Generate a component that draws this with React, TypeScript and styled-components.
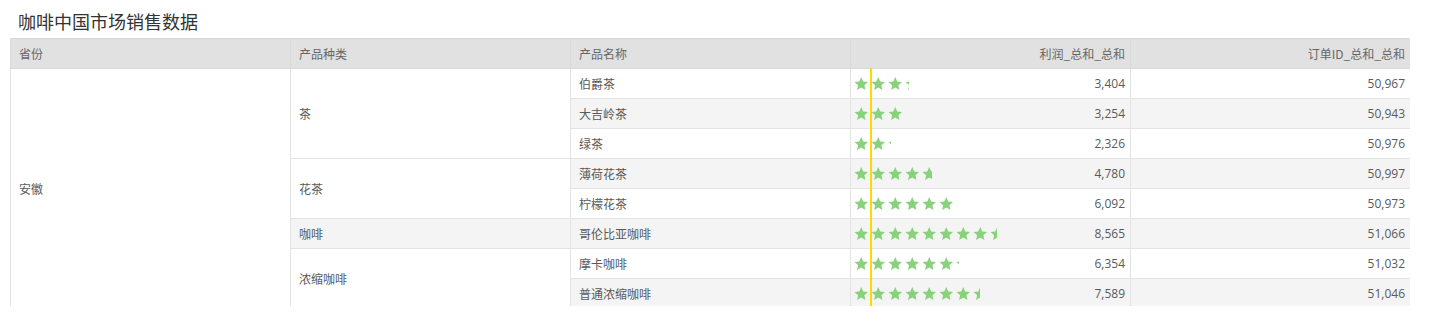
import React from "react";
import styled, { createGlobalStyle } from "styled-components";

const GlobalStyle = createGlobalStyle`
  html, body { margin: 0; padding: 0; background: #ffffff; }
  body { font-family: "Open Sans", "Noto Sans CJK SC", sans-serif; }
`;

const Page = styled.div`
  padding: 0 0 0 10px;
  width: 1400px;
`;

const Title = styled.h1`
  margin: 0;
  height: 38px;
  padding: 9px 0 0 8px;
  box-sizing: border-box;
  font-family: "Noto Sans CJK SC", sans-serif;
  font-size: 18px;
  line-height: 24px;
  font-weight: 400;
  color: #333333;
`;

const TableFrame = styled.div`
  height: 268px;
  overflow: hidden;
`;

const Table = styled.table`
  width: 1400px;
  border-collapse: collapse;
  table-layout: fixed;
  font-family: "Open Sans", "Noto Sans CJK SC", sans-serif;
  font-size: 12px;
  color: #555555;
`;

const HeadCell = styled.th<{ $right?: boolean }>`
  height: 29px;
  padding: 0 ${(p) => (p.$right ? "5px" : "8px")} 0 8px;
  background: #e1e1e1;
  border: 1px solid #d9d9d9;
  font-weight: 400;
  color: #666666;
  text-align: ${(p) => (p.$right ? "right" : "left")};
  white-space: nowrap;
  font-family: "Noto Sans CJK SC", sans-serif;
`;

const Cell = styled.td<{ $striped?: boolean; $right?: boolean }>`
  height: 29px;
  padding: 0 ${(p) => (p.$right ? "5px" : "8px")} 0 8px;
  background: ${(p) => (p.$striped ? "#f4f4f4" : "#ffffff")};
  border: 1px solid #e3e3e3;
  text-align: ${(p) => (p.$right ? "right" : "left")};
  white-space: nowrap;
  color: #5a5a5a;
`;

const CjkText = styled.span`
  font-family: "Noto Sans CJK SC", sans-serif;
`;

const BarCell = styled.td<{ $striped?: boolean }>`
  position: relative;
  height: 29px;
  padding: 0 5px 0 0;
  background: ${(p) => (p.$striped ? "#f4f4f4" : "#ffffff")};
  border: 1px solid #e3e3e3;
`;

const BarRow = styled.div`
  display: flex;
  align-items: center;
  justify-content: space-between;
`;

const StarClip = styled.div`
  overflow: hidden;
  display: flex;
  flex-wrap: nowrap;
  height: 17px;
`;

const Star = styled.svg`
  flex: 0 0 17px;
  width: 17px;
  height: 17px;
`;

const RefLine = styled.div`
  position: absolute;
  left: 19px;
  top: -1px;
  bottom: -1px;
  width: 2px;
  background: #ffd800;
  z-index: 1;
`;

const Value = styled.span`
  color: #5a5a5a;
`;

const UNIT = 17;

const STAR_POINTS =
  "10.25,2 12.19,6.53 17,7.01 13.39,10.22 14.42,14.94 10.25,12.5 6.08,14.94 7.11,10.22 3.5,7.01 8.31,6.53";

function StarBar({ value }: { value: number }) {
  const width = (value / 1000) * UNIT;
  return (
    <StarClip style={{ width }}>
      {Array.from({ length: 10 }).map((_, i) => (
        <Star key={i} viewBox="0 0 17 17">
          <polygon fill="#88d27b" points={STAR_POINTS} />
        </Star>
      ))}
    </StarClip>
  );
}

type Row = {
  province?: { text: string; span: number };
  category?: { text: string; span: number; striped?: boolean };
  name: string;
  profit: number;
  orders: number;
};

const rows: Row[] = [
  { province: { text: "安徽", span: 8 }, category: { text: "茶", span: 3 }, name: "伯爵茶", profit: 3404, orders: 50967 },
  { name: "大吉岭茶", profit: 3254, orders: 50943 },
  { name: "绿茶", profit: 2326, orders: 50976 },
  { category: { text: "花茶", span: 2 }, name: "薄荷花茶", profit: 4780, orders: 50997 },
  { name: "柠檬花茶", profit: 6092, orders: 50973 },
  { category: { text: "咖啡", span: 1, striped: true }, name: "哥伦比亚咖啡", profit: 8565, orders: 51066 },
  { category: { text: "浓缩咖啡", span: 2 }, name: "摩卡咖啡", profit: 6354, orders: 51032 },
  { name: "普通浓缩咖啡", profit: 7589, orders: 51046 },
];

const fmt = (n: number) => n.toLocaleString("en-US");

export default function App() {
  return (
    <>
      <GlobalStyle />
      <Page>
        <Title>咖啡中国市场销售数据</Title>
        <TableFrame>
          <Table>
            <colgroup>
              <col style={{ width: 280 }} />
              <col style={{ width: 280 }} />
              <col style={{ width: 280 }} />
              <col style={{ width: 280 }} />
              <col style={{ width: 280 }} />
            </colgroup>
            <thead>
              <tr>
                <HeadCell>省份</HeadCell>
                <HeadCell>产品种类</HeadCell>
                <HeadCell>产品名称</HeadCell>
                <HeadCell $right>利润_总和_总和</HeadCell>
                <HeadCell $right>订单ID_总和_总和</HeadCell>
              </tr>
            </thead>
            <tbody>
              {rows.map((r, i) => {
                const striped = i % 2 === 1;
                return (
                  <tr key={r.name}>
                    {r.province && (
                      <Cell rowSpan={r.province.span}>
                        <CjkText>{r.province.text}</CjkText>
                      </Cell>
                    )}
                    {r.category && (
                      <Cell rowSpan={r.category.span} $striped={r.category.striped}>
                        <CjkText>{r.category.text}</CjkText>
                      </Cell>
                    )}
                    <Cell $striped={striped}>
                      <CjkText>{r.name}</CjkText>
                    </Cell>
                    <BarCell $striped={striped}>
                      <RefLine />
                      <BarRow>
                        <StarBar value={r.profit} />
                        <Value>{fmt(r.profit)}</Value>
                      </BarRow>
                    </BarCell>
                    <Cell $striped={striped} $right>
                      {fmt(r.orders)}
                    </Cell>
                  </tr>
                );
              })}
            </tbody>
          </Table>
        </TableFrame>
      </Page>
    </>
  );
}
